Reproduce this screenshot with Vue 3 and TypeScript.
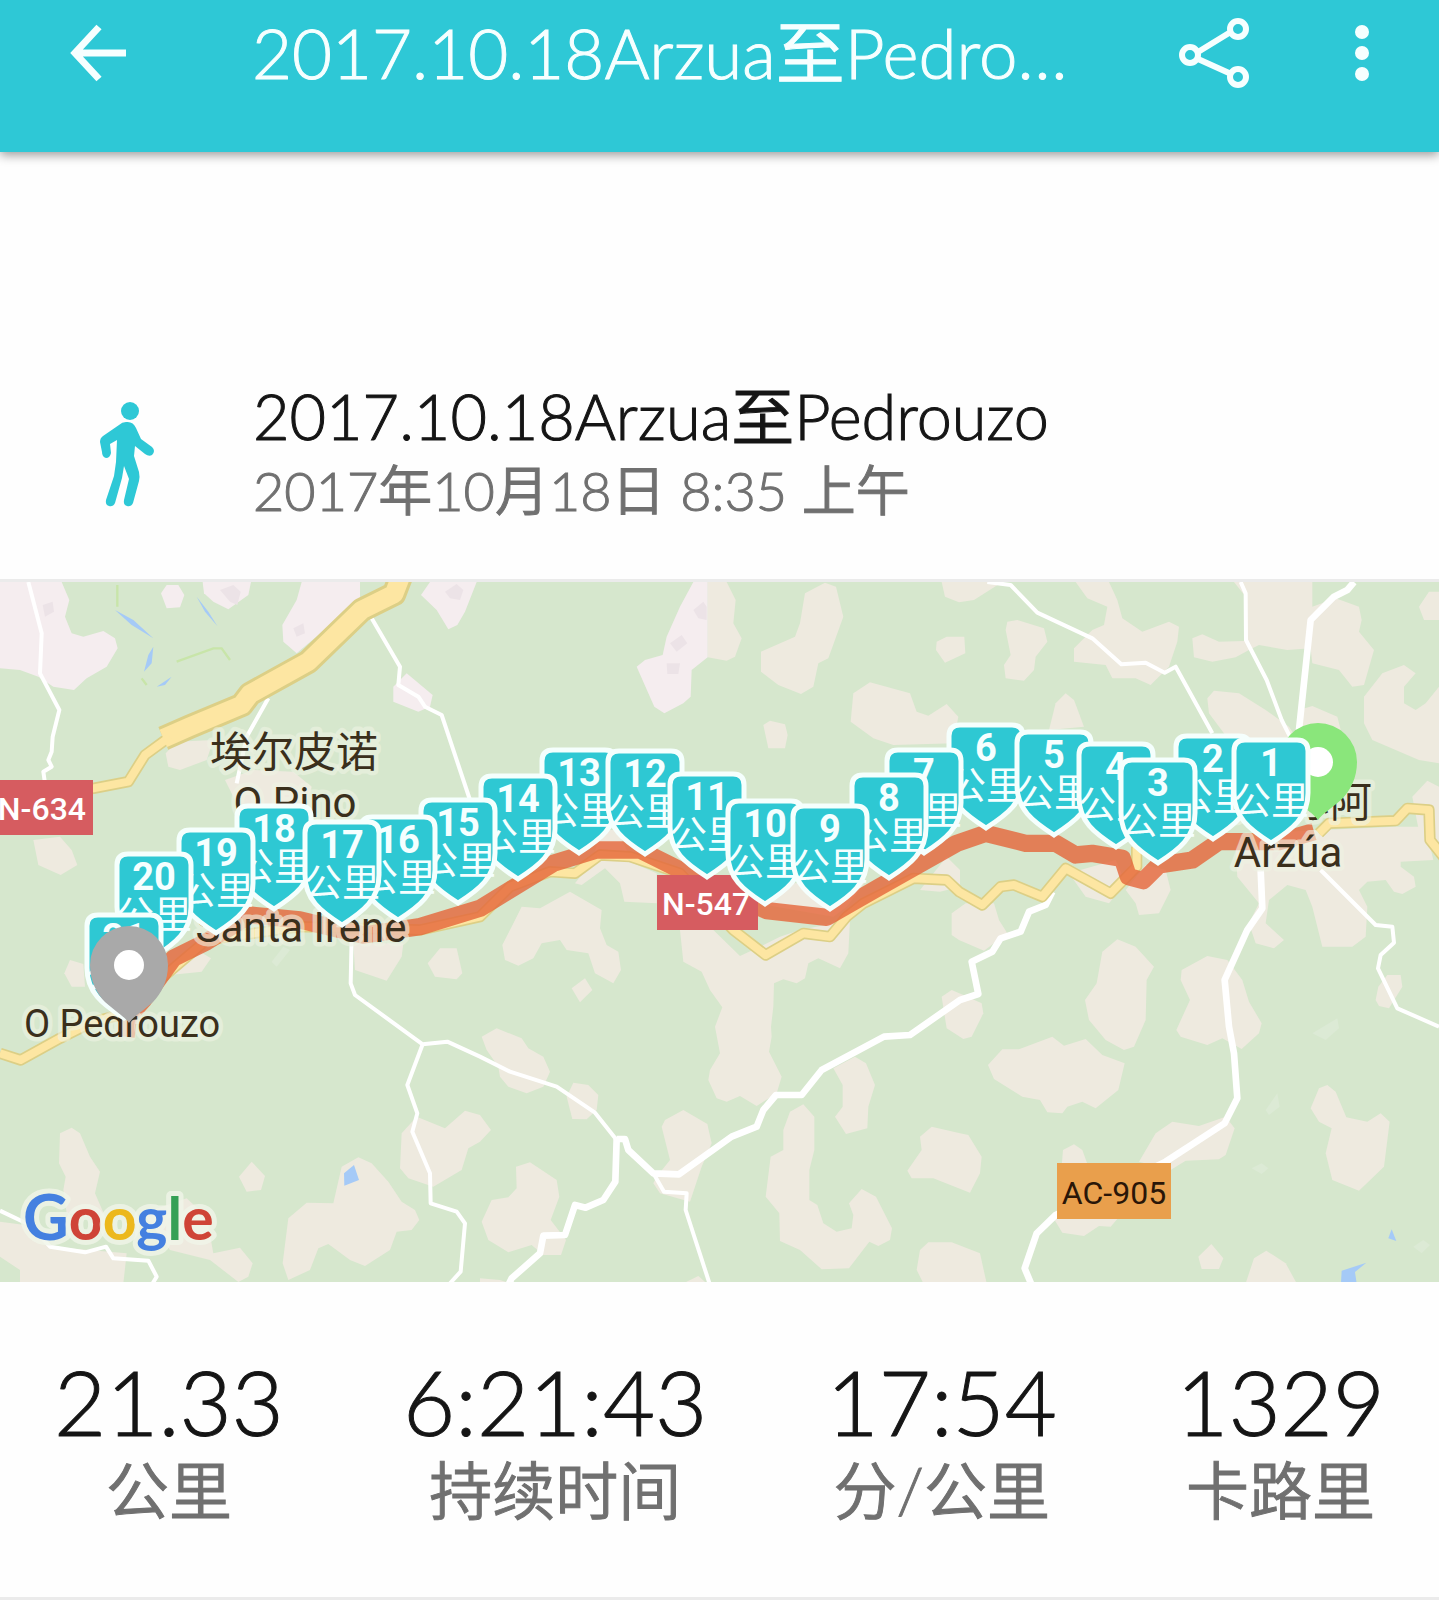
<script setup lang="ts">
interface Marker {
  km: number
  x: number
  y: number
}

interface Stat {
  value: string
  label: string
}

const title = '2017.10.18Arzua至Pedrouzo'
const startedAt = '2017年10月18日 8:35 上午'

const stats: Stat[] = [
  { value: '21.33', label: '公里' },
  { value: '6:21:43', label: '持续时间' },
  { value: '17:54', label: '分/公里' },
  { value: '1329', label: '卡路里' },
]

// x, y is the tip of each shield on the 1439 x 700 map
const kilometres: Marker[] = [
  { km: 1, x: 1271, y: 263 },
  { km: 2, x: 1213, y: 259 },
  { km: 3, x: 1158, y: 283 },
  { km: 4, x: 1116, y: 267 },
  { km: 5, x: 1054, y: 255 },
  { km: 6, x: 986, y: 248 },
  { km: 7, x: 924, y: 273 },
  { km: 8, x: 889, y: 298 },
  { km: 9, x: 830, y: 329 },
  { km: 10, x: 765, y: 324 },
  { km: 11, x: 707, y: 297 },
  { km: 12, x: 645, y: 274 },
  { km: 13, x: 579, y: 273 },
  { km: 14, x: 518, y: 299 },
  { km: 15, x: 458, y: 323 },
  { km: 16, x: 398, y: 340 },
  { km: 17, x: 342, y: 345 },
  { km: 18, x: 274, y: 329 },
  { km: 19, x: 216, y: 353 },
  { km: 20, x: 154, y: 377 },
  { km: 21, x: 124, y: 438 },
]

// southern markers lie over northern ones
const markers = [...kilometres].sort((a, b) => a.y - b.y)

const shield =
  'M-26-105H26Q37-105 37-94V-52C37-28 22-16 0-2C-22-16-37-28-37-52V-94Q-37-105-26-105Z'
const pin =
  'M0 58C-4 52-14 46-24 37C-32 29-39 16-39 0A39 39 0 0 1 39 0C39 16 32 29 24 37C14 46 4 52 0 58Z'

// terrain is surveyed at three units per map pixel
const fields: string[] = [
  'M497 550L530 515L640 510L620 570L540 600L505 590Z',
  'M675 630L760 600L880 605L935 650L900 760L740 760L700 680Z',
  'M100 810L180 800L215 840L232 885L182 915L115 885Z',
  'M2123 36H2180L2207 90L2200 160L2225 205L2205 260L2180 272L2123 262Z',
  'M2415 70L2475 38L2508 50L2530 140L2485 265L2455 280L2440 350L2403 372L2335 345L2283 305V245L2385 200L2400 160Z',
  'M2825 36H3007L2922 90L2877 97L2835 80Z',
  'M2810 215L2840 200H2893L2896 250L2835 278L2808 240Z',
  'M2560 370L2610 337L2730 370L2750 425L2785 437L2840 402L2875 440L2860 520L2680 525L2620 505L2552 455Z',
  'M2290 465L2310 452L2355 463L2363 495L2355 535H2305Z',
  'M1725 940L1780 870L1800 780H1850L1900 880L1970 910V1000L1873 995L1860 940L1815 895L1745 945Z',
  'M1535 1070L1565 1010L1620 1015L1710 965L1805 1020L1800 1075L1820 1125L1855 1145L1863 1200L1840 1240L1785 1210L1765 1150L1700 1140L1680 1110L1625 1120L1600 1165L1555 1187L1515 1170L1507 1125Z',
  'M2270 1000L2380 940L2600 930L2540 1010L2500 1040Z',
  'M2760 960L2840 860L2880 900V950L2820 965Z',
  'M2855 1030L2897 1000H2982L2997 1050L3022 1090L2952 1142L2877 1110L2855 1095Z',
  'M2040 1080H2140L2220 1158L2270 1135L2340 1100L2400 1080L2550 1050L2545 1150L2520 1195L2455 1165L2425 1180L2415 1225L2390 1240L2350 1228L2322 1240L2320 1310L2313 1370L2315 1400L2307 1445L2345 1520L2330 1570L2270 1608L2220 1578L2180 1595L2150 1585L2125 1530L2130 1500L2160 1450L2145 1370L2167 1312L2130 1260L2105 1205L2050 1175Z',
  'M1715 1255L1755 1225L1777 1260L1740 1297Z',
  'M1445 1400L1490 1375L1565 1405L1585 1435L1630 1460L1650 1505L1630 1550L1580 1570L1525 1550L1500 1520L1495 1490L1460 1440Z',
  'M1700 1580L1720 1538L1765 1545L1795 1575L1790 1620L1760 1648L1717 1647Z',
  'M1250 1640L1335 1675L1395 1622L1440 1635L1473 1680L1440 1715L1405 1735L1385 1800L1300 1850L1225 1825L1200 1795L1205 1690Z',
  'M1985 1670L1995 1650L2050 1620L2122 1662L2135 1720L2105 1790L2085 1850L2070 1895L1980 1870L1960 1840L1970 1820L2010 1770Z',
  'M1548 1790L1590 1777L1670 1830L1678 1880L1652 1950L1698 2010L1683 2055H1630L1595 2025L1525 2047L1465 2010L1445 1955L1475 1890L1525 1882L1550 1855Z',
  'M2500 1495L2565 1460L2598 1480L2625 1545L2605 1610L2602 1675L2538 1692L2505 1640L2528 1610V1545Z',
  'M2370 1625L2410 1603L2443 1640V1740L2428 1800V1890L2452 1905L2470 1960L2510 1985L2555 1975L2560 1935L2547 1900L2585 1857L2628 1880L2676 1975L2670 2010L2635 2028L2608 2015L2547 2095L2465 2098L2400 2040L2340 2013L2338 1930L2297 1880L2312 1760L2350 1740V1680Z',
  'M2760 1700L2795 1670L2880 1690L2905 1695L2945 1760L2940 1810L2910 1868L2800 1825H2735L2722 1802L2765 1740Z',
  'M2750 2100L2760 2040L2785 2017H2855L2940 2050L2960 2140H2770Z',
  'M2825 1280L2855 1260L2890 1275L2945 1300L2950 1330L2915 1400L2890 1407L2840 1375Z',
  'M2050 2140L2095 2118L2120 2140Z',
  'M1440 2125L1500 2130L1530 2140H1440Z',
  'M3227 36H3327L3352 90L3367 145L3427 185L3507 155L3537 170L3532 215L3507 290L3452 345L3407 325H3337L3317 285L3222 275V235L3277 180L3312 165L3322 110L3262 85Z',
  'M3017 180L3022 155L3052 150L3132 175L3142 215L3107 260L3102 300L3072 332L3017 325L3012 285L3032 255Z',
  'M3167 400L3197 370L3222 390L3252 470L3147 480Z',
  'M3577 205L3607 193L3657 215L3732 213L3737 80L3702 36H3937V110L4007 85L4077 110L4085 150L4077 185L4122 240L4092 345L4057 350L4017 300L3937 280L3932 235L3862 240L3777 225L3747 240L3707 262L3637 275L3582 262Z',
  'M3622 385L3642 362L3717 370L3797 420L3867 470L3887 500L3897 420L3937 408L4012 440L4030 510H3687L3627 430Z',
  'M4257 110L4287 65H4317V150H4272Z',
  'M4092 380L4147 310L4212 285L4247 310L4212 350V400L4247 420L4277 400L4317 350V580L4257 570L4187 540L4117 510L4092 460Z',
  'M4237 680L4282 632L4317 650V870L4260 800Z',
  'M3967 780L4187 770H4277L4300 870L4202 875V890L4242 920L4247 950L4207 972L4182 965L4157 930L4102 935L4077 960L4102 1010L4097 1100L4057 1130H3967L3937 1010L3917 960L3862 945L3807 990L3797 1060L3852 1110L3822 1135L3767 1120L3747 1060L3777 1000L3712 920L3707 830L3777 790Z',
  'M3437 885L3497 900L3512 960L3477 1030L3417 1035L3407 1000L3377 960Z',
  'M3207 910L3347 870L3377 940L3327 1000L3257 980Z',
  'M3307 1145L3352 1108L3407 1130L3462 1190L3440 1230L3437 1350L3402 1430L3372 1440L3317 1410L3267 1350L3255 1290L3290 1240Z',
  'M2964 1485L3007 1438H3057L3157 1400L3192 1427L3257 1407L3307 1455L3374 1480L3355 1560L3287 1615L3247 1595L3202 1610L3187 1630L3142 1627L3120 1590L3067 1580L2982 1527Z',
  'M3545 1200L3622 1158L3682 1170L3727 1230L3747 1295L3785 1360L3777 1390L3725 1437L3667 1405L3622 1425L3542 1400L3529 1380L3570 1290L3542 1230Z',
  'M3417 1775L3467 1690L3517 1655L3597 1668L3677 1640L3704 1675L3677 1755L3657 1768L3557 1772L3512 1800Z',
  'M3185 1790L3189 1740L3222 1723L3247 1740L3265 1790Z',
  'M3162 1947H3352L3332 1970L3297 1968L3252 1998L3187 1988Z',
  'M3932 1615L3957 1555L3982 1545L4007 1565L4039 1642L4102 1655L4142 1630L4169 1655L4152 1790L4077 1862L3997 1830L3977 1750L3995 1675L3957 1655Z',
  'M4127 1290L4135 1250L4162 1215H4202L4207 1250L4167 1315L4137 1308Z',
  'M3595 2060L3634 2022L3670 2065L3657 2097H3605Z',
  'M3737 2140L3762 2065L3799 2042L3857 2080L3890 2140Z',
  'M193 1210L210 1170L250 1182L255 1250H215Z',
  'M510 1185L600 1145L633 1165L605 1205L510 1215Z',
  'M1060 1120H1210L1205 1160L1160 1232L1065 1200Z',
  'M1283 1180L1320 1135H1370L1387 1210L1370 1228L1305 1220Z',
  'M180 1690L215 1673L240 1690L270 1760L300 1805L285 1870L320 1950L200 1930L190 1860L197 1820L177 1780Z',
  'M717 1820L755 1775L795 1818L783 1860L740 1865Z',
  'M1025 1790L1075 1762L1115 1780L1165 1835L1205 1895L1245 1920L1258 1950L1235 1980L1190 1985L1170 2040L1095 2088L1050 2070L985 2022L955 2035L930 2100L865 2130L848 2080L865 1945L920 1898L1000 1900Z',
  'M0 1955L75 1965L150 2030L380 2050L370 2140H60V2100L0 2060Z',
  'M430 1930L560 1885L620 1940L640 2050L720 2033L758 2080L745 2120L715 2136L630 2070L510 2040Z',
]

const towns: string[] = [
  'M0 36H185L208 90L195 140L215 190L250 200L310 183L345 205L353 235L320 290L260 325L222 360L160 350L115 320L60 300L0 295Z',
  'M483 70L500 45H535L553 75L540 112L500 115Z',
  'M608 36H753L745 75L685 118L640 95L612 70Z',
  'M905 36H1080V90L890 250L850 215L847 165L890 90Z',
  'M1290 36H1430L1395 125L1372 165L1345 178L1310 120L1263 75Z',
  'M1220 310L1298 375L1290 410L1255 425L1180 395V350Z',
  'M2080 36H2123V262L2075 300L2072 380L2050 400L1993 430L1963 410L1910 290L1935 270L1988 255L2000 200L2040 110Z',
]

const blocks: string[] = [
  'M128 105L158 95L162 125L135 140Z',
  'M660 60L700 45L722 65L712 105L690 95Z',
  'M880 175L910 160L915 190L890 200Z',
  'M1335 65L1370 42L1390 60L1380 90L1350 85Z',
  'M2080 120L2110 95L2120 110V150L2095 145Z',
  'M2010 220L2045 195L2062 220L2030 245Z',
  'M2000 280H2040L2035 312H2002Z',
]

const lanes: string[] = [
  'M85 36L125 190L120 310L178 420L158 500L155 545L145 570L155 590L130 605L135 640',
  'M1115 145L1200 290L1195 345L1255 380L1275 410L1325 435L1410 690',
  'M805 385L740 500L710 640',
  'M1055 1100L1052 1240L1065 1275L1268 1423L1342 1415L1440 1460L1530 1505L1670 1550L1785 1628L1850 1710',
  'M1268 1423L1222 1545L1252 1630L1237 1685L1290 1810L1292 1900L1370 1925L1395 1960L1382 2105L1350 2140',
  'M0 1922L90 1965L150 2030L255 2047L318 2030L340 2065L445 2072L470 2120L455 2145',
  'M1960 1810L1992 1865L2060 1870L2057 1920L2130 2145',
  'M2962 36L3032 45L3112 128L3277 205L3364 283L3437 278L3494 308L3527 290L3637 490',
  'M3722 36L3737 70L3738 210L3800 330L3845 450L3870 500',
  'M3962 900L4127 1065L4177 1070L4182 1118L4142 1155L4134 1195L4192 1315L4317 1370',
]

const roads: string[] = [
  'M1850 1707H1875L1885 1740L1960 1810L2037 1813L2195 1700L2270 1670L2290 1620L2328 1575H2405L2465 1500L2652 1400L2730 1395L2880 1290L2935 1272L2915 1175L2977 1145L3002 1105L3062 1085L3087 1025L3137 1005L3157 965',
  'M1850 1707L1846 1835L1810 1890L1757 1913L1725 1905L1695 1995L1630 1997L1620 2050L1535 2125L1525 2145',
  'M4062 36L4042 60L4002 80L3932 150L3897 480',
  'M3782 900L3787 1015L3742 1080L3674 1230L3687 1370L3702 1450L3712 1585L3674 1660L3497 1775L3167 1935L3110 1990L3074 2095L3095 2145',
]

const motorway = 'M1202 20L1182 72L1085 120L925 275L750 372L725 405L570 470L490 505'
const highways: string[] = [
  'M510 500L435 555L385 635L280 655L0 690',
  'M0 1450L62 1470L180 1405L280 1355L380 1330L420 1280L620 1110L900 1070L1260 1080L1440 1040L1530 950L1650 905L1725 910L1800 855L1890 860L2040 910L2200 1080L2297 1155L2410 1090L2490 1100L2540 1040L2590 1000L2740 925L2840 930L2877 965L2947 1005L3002 950L3042 945L3127 980L3197 895L3332 970L3410 890L3410 830',
  'M3957 790L3987 760L4187 752L4222 715L4287 720L4290 810L4330 860',
]
const route =
  'M3942 785L3837 815L3657 815L3577 870L3477 885L3430 932L3385 920L3367 865L3277 850L3227 855L3167 820H3077L2957 790L2870 820L2640 950L2480 1042L2300 1022L2140 950L2000 880L1920 840H1790L1660 880L1440 1015L1260 1070L1090 1095L900 1050L750 1035L620 1115L520 1165L430 1290L385 1340L378 1400'
</script>

<template>
  <main class="page">
    <header class="bar">
      <button class="icon-button" type="button" aria-label="返回">
        <svg width="60" height="60" viewBox="0 0 60 60" aria-hidden="true">
          <path d="M31 4L7 30L31 56M7 30H58" fill="none" stroke="currentColor" stroke-width="7" />
        </svg>
      </button>
      <h1 class="bar-title">{{ title }}</h1>
      <button class="icon-button" type="button" aria-label="分享">
        <svg width="72" height="72" viewBox="0 0 72 72" aria-hidden="true">
          <g fill="none" stroke="currentColor" stroke-width="6">
            <path d="M20 35L51 16M20 42L51 56" />
            <circle cx="12" cy="38" r="8" />
            <circle cx="60" cy="12" r="8" />
            <circle cx="60" cy="60" r="8" />
          </g>
        </svg>
      </button>
      <button class="icon-button" type="button" aria-label="更多">
        <svg width="60" height="60" viewBox="0 0 60 60" aria-hidden="true">
          <g fill="currentColor">
            <circle cx="30" cy="9" r="7" />
            <circle cx="30" cy="30" r="7" />
            <circle cx="30" cy="51" r="7" />
          </g>
        </svg>
      </button>
    </header>

    <section class="activity">
      <svg class="walker" width="60" height="110" viewBox="0 0 60 110" aria-hidden="true">
        <circle cx="31" cy="11" r="9" />
        <path
          d="M27 22Q34 21 37 28L42 39L53 47Q57 51 53 55Q50 57 46 54L36 46L35 56L40 72Q41 77 40 81L34 103Q32 107 28 106Q24 105 25 100L30 79L25 66L23 78L16 103Q14 107 10 106Q6 105 7 100L15 76L17 62L18 40L11 44L12 53Q11 58 7 58Q3 57 3 52L1 42Q1 38 4 36L20 25Q23 22 27 22Z"
        />
      </svg>
      <div class="activity-text">
        <h2 class="activity-title">{{ title }}</h2>
        <p class="activity-date">{{ startedAt }}</p>
      </div>
    </section>

    <svg class="map" viewBox="0 0 1439 700" role="img" aria-label="路线地图">
      <rect width="1439" height="700" fill="#d6e7cd" />
      <g transform="translate(0 -12) scale(0.33333)">
        <g fill="#eeeadf"><path v-for="d in fields" :key="d" :d="d" /></g>
        <g fill="#f5edef"><path v-for="d in towns" :key="d" :d="d" /></g>
        <g fill="#ece3e7"><path v-for="d in blocks" :key="d" :d="d" /></g>
        <g fill="#dcead5">
          <path d="M3937 1390L4012 1345L4017 1375L3977 1410Z" />
          <path d="M3797 1620L3832 1570L3839 1610L3807 1635Z" />
          <path d="M3755 1795L3785 1780L3805 1795L3785 1812Z" />
          <path d="M4240 2030L4270 2010L4290 2025L4265 2050Z" />
          <path d="M815 1175L850 1130L870 1140L830 1190Z" />
        </g>
        <g fill="#a5caf7">
          <path d="M1032 1810L1062 1785L1077 1830L1033 1847Z" />
          <path d="M4025 2102L4099 2078L4065 2106L4070 2140H4023Z" />
          <path d="M4165 2005L4175 1978L4189 2013Z" />
          <path d="M345 120L400 150L460 205L395 165ZM460 230L455 280L432 305L445 255ZM515 320L495 345L470 350ZM590 80L625 125L652 168L615 125Z" />
        </g>
        <path
          d="M352 45V110M530 275L640 235L665 235L690 270M425 325L440 345"
          fill="none"
          stroke="#c8e5a9"
          stroke-width="7"
        />
        <g class="lane"><path v-for="d in lanes" :key="d" :d="d" /></g>
        <g class="road"><path v-for="d in roads" :key="d" :d="d" /></g>
        <g class="highway-edge"><path v-for="d in highways" :key="d" :d="d" /></g>
        <path class="motorway-edge" :d="motorway" />
        <path class="motorway" :d="motorway" />
        <g class="highway"><path v-for="d in highways" :key="d" :d="d" /></g>
        <path class="route" :d="route" />
      </g>

      <g class="place">
        <text x="294" y="185" text-anchor="middle">埃尔皮诺</text>
        <text x="295" y="235" text-anchor="middle">O Pino</text>
        <text x="301" y="360" text-anchor="middle">Santa Irene</text>
        <text class="place-small" x="122" y="455" text-anchor="middle">O Pedrouzo</text>
        <text x="1288" y="235" text-anchor="middle">阿尔苏阿</text>
        <text x="1288" y="285" text-anchor="middle">Arzúa</text>
      </g>

      <rect y="198" width="93" height="55" fill="#d65c60" />
      <text class="sign" x="86" y="238" text-anchor="end">N-634</text>
      <rect x="657" y="293" width="101" height="55" fill="#d65c60" />
      <text class="sign" x="706" y="333" text-anchor="middle">N-547</text>
      <rect x="1057" y="581" width="114" height="56" fill="#e99f4c" />
      <text class="sign sign-local" x="1114" y="622" text-anchor="middle">AC-905</text>

      <text class="google" x="23" y="658"><tspan class="google-initial" fill="#4480e0">G</tspan><tspan fill="#cf4437">o</tspan><tspan fill="#ecb81c">o</tspan><tspan fill="#4480e0">g</tspan><tspan fill="#35a055">l</tspan><tspan fill="#cf4437">e</tspan></text>

      <g transform="translate(1318 180)">
        <path :d="pin" fill="#8ae67b" />
        <circle r="15" fill="#fff" />
      </g>
      <g v-for="m in markers" :key="m.km" :transform="`translate(${m.x} ${m.y})`">
        <path class="shield" :d="shield" />
        <text class="km" y="-69" text-anchor="middle">{{ m.km }}</text>
        <text class="unit" y="-31" text-anchor="middle">公里</text>
      </g>
      <g transform="translate(129 383)">
        <path :d="pin" fill="#a9a9a9" />
        <circle r="15" fill="#fff" />
      </g>
    </svg>

    <dl class="stats">
      <div v-for="s in stats" :key="s.label" class="stat">
        <dt class="stat-label">{{ s.label }}</dt>
        <dd class="stat-value">{{ s.value }}</dd>
      </div>
    </dl>
  </main>
</template>

<style>
body {
  margin: 0;
  background: #fefefe;
}
</style>

<style scoped>
.page {
  font-family: Lato, 'Noto Sans CJK SC', sans-serif;
  font-weight: 350;
  color: #151515;
  border-bottom: 3px solid #ebebeb;
  -webkit-text-stroke: 1px currentColor;
}

.bar {
  display: flex;
  align-items: center;
  height: 106px;
  padding: 0 47px 46px 68px;
  background: #2ec8d6;
  color: #f6ffff;
  box-shadow: 0 3px 10px rgba(0, 0, 0, 0.4);
}

.icon-button {
  display: flex;
  flex: none;
  padding: 0;
  border: 0;
  background: none;
  color: inherit;
}

.bar-title {
  flex: 1;
  min-width: 0;
  margin: 0 98px 0 124px;
  overflow: hidden;
  font-size: 69px;
  font-weight: inherit;
  line-height: 96px;
  text-overflow: ellipsis;
  white-space: nowrap;
}

.icon-button + .icon-button {
  margin-left: 82px;
}

.activity {
  display: flex;
  align-items: center;
  gap: 94px;
  padding: 231px 60px 52px 99px;
  border-bottom: 3px solid #ebebeb;
}

.walker {
  flex: none;
  fill: #2ec8d6;
}

.activity-title,
.activity-date {
  margin: 0;
  font-weight: inherit;
}

.activity-title {
  font-size: 63px;
  line-height: 66px;
}

.activity-date {
  margin-top: 6px;
  font-size: 54px;
  line-height: 72px;
  color: #707070;
}

.map {
  display: block;
  width: 100%;
  height: auto;
  font-family: Roboto, 'Noto Sans CJK SC', sans-serif;
  font-weight: 400;
  -webkit-text-stroke: 0;
}

.lane,
.road,
.highway,
.highway-edge,
.motorway,
.motorway-edge,
.route {
  fill: none;
  stroke: #fff;
  stroke-linejoin: round;
}

.lane {
  stroke-width: 12px;
}

.road {
  stroke-width: 20px;
}

.highway-edge {
  stroke: #dccf86;
  stroke-width: 34px;
}

.highway {
  stroke: #fde6a2;
  stroke-width: 24px;
}

.motorway-edge {
  stroke: #dccf86;
  stroke-width: 74px;
}

.motorway {
  stroke: #fde6a2;
  stroke-width: 56px;
}

.route {
  stroke: #e5653a;
  stroke-opacity: 0.8;
  stroke-width: 52px;
}

.place {
  font-size: 42px;
  fill: #3a2f1c;
  stroke: rgba(238, 243, 228, 0.6);
  stroke-width: 9px;
  stroke-linejoin: round;
  paint-order: stroke;
}

.place-small {
  font-size: 38px;
}

.sign {
  font-size: 32px;
  font-weight: 500;
  fill: #fff;
}

.sign-local {
  font-weight: 400;
  fill: #2a1608;
}

.google {
  font-family: Lato, sans-serif;
  font-size: 59px;
  font-weight: 700;
  stroke: rgba(240, 245, 233, 0.8);
  stroke-width: 10px;
  stroke-linejoin: round;
  paint-order: stroke;
}

.google-initial {
  font-size: 63px;
}

.shield {
  fill: #2ec8d3;
  stroke: #f5fffd;
  stroke-width: 5px;
}

.km {
  font-size: 38px;
  font-weight: 700;
  fill: #f5ffff;
}

.unit {
  font-size: 38px;
  fill: #f5ffff;
}

.stats {
  display: flex;
  justify-content: space-between;
  margin: 0;
  padding: 69px 54px 68px;
}

.stat {
  display: flex;
  flex-direction: column-reverse;
  align-items: center;
}

.stat-value {
  margin: 0;
  font-size: 90px;
  line-height: 100px;
}

.stat-label {
  font-size: 63px;
  line-height: 78px;
  color: #707070;
}
</style>
